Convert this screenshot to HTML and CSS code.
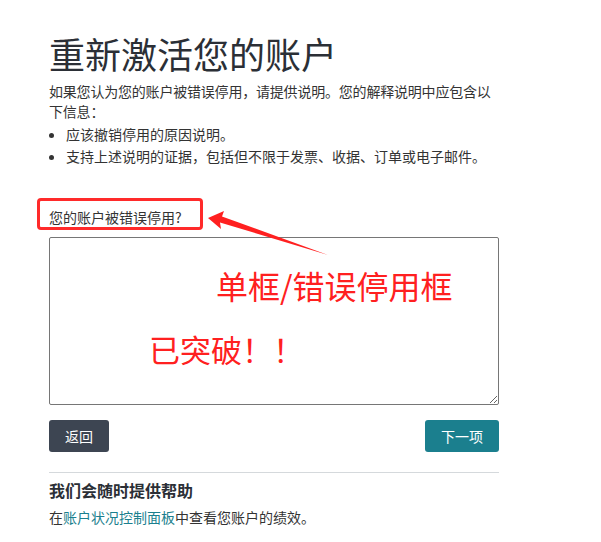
FILE: index.html
```html
<!DOCTYPE html>
<html lang="zh-CN">
<head>
    <meta charset="UTF-8">
    <meta name="viewport" content="width=device-width, initial-scale=1.0">
    <title>重新激活您的账户</title>
    <link rel="stylesheet" href="styles.css">
</head>
<body>
    <div class="page">
        <h1 class="title">重新激活您的账户</h1>
        <p class="intro">如果您认为您的账户被错误停用，请提供说明。您的解释说明中应包含以下信息：</p>
        <ul class="reasons">
            <li>应该撤销停用的原因说明。</li>
            <li>支持上述说明的证据，包括但不限于发票、收据、订单或电子邮件。</li>
        </ul>

        <label class="field-label" for="reason">您的账户被错误停用?</label>
        <textarea id="reason" class="field"></textarea>

        <div class="actions">
            <button class="btn btn-back">返回</button>
            <button class="btn btn-next">下一项</button>
        </div>

        <div class="help">
            <h2>我们会随时提供帮助</h2>
            <p>在<a href="#">账户状况控制面板</a>中查看您账户的绩效。</p>
        </div>
    </div>

    <!-- screenshot annotations -->
    <div class="notes">
        <svg class="arrow" width="601" height="542" viewBox="0 0 601 542">
            <polygon points="208,218 224,211 222,216.5 328,255 220,222.5 221,229" fill="#ff2020"/>
        </svg>
        <div class="note note-1">单框/错误停用框</div>
        <div class="note note-2">已突破！！</div>
    </div>
</body>
</html>
```

FILE: styles.css
```css
body {
    margin: 0;
    font-family: "Noto Sans CJK SC", "Noto Sans", sans-serif;
    color: #333;
    background: #fff;
    position: relative;
    min-height: 542px;
}
.page {
    width: 450px;
    padding: 31px 0 0 49px;
}
.title {
    font-size: 36px;
    font-weight: 400;
    line-height: 44px;
    color: #2b2f36;
    margin: 0 0 6px;
}
.intro {
    font-size: 14px;
    line-height: 20px;
    letter-spacing: -0.2px;
    margin: 0;
}
.reasons {
    font-size: 14px;
    line-height: 22px;
    margin: 2px 0 0;
    padding-left: 17px;
}
.field-label {
    display: block;
    position: relative;
    width: 140px;
    font-size: 14px;
    line-height: 20px;
    margin-top: 40px;
}
.field-label::after {
    content: "";
    position: absolute;
    left: -12px;
    top: -9px;
    width: 160px;
    height: 26px;
    border: 3px solid #ff2a2a;
    border-radius: 4px;
}
.field {
    display: block;
    box-sizing: border-box;
    width: 450px;
    height: 168px;
    margin-top: 10px;
    border: 1px solid #767676;
    border-radius: 2px;
    font: inherit;
}
.actions {
    display: flex;
    justify-content: space-between;
    margin-top: 15px;
}
.btn {
    height: 32px;
    padding: 0 16px;
    border: none;
    border-radius: 3px;
    color: #fff;
    font-family: inherit;
    font-size: 14px;
}
.btn-back {
    background: #3d4552;
}
.btn-next {
    background: #1b7f8e;
}
.help {
    margin-top: 20px;
    border-top: 1px solid #d5d9dc;
    padding-top: 6px;
}
.help h2 {
    font-size: 16px;
    line-height: 22px;
    margin: 0;
    color: #2b2f36;
}
.help p {
    font-size: 14px;
    line-height: 20px;
    margin: 6px 0 0;
}
.help a {
    color: #1b7f8e;
    text-decoration: none;
}
.notes {
    position: absolute;
    left: 0;
    top: 0;
    width: 601px;
    height: 542px;
    pointer-events: none;
}
.arrow {
    position: absolute;
    left: 0;
    top: 0;
}
.note {
    position: absolute;
    color: #ff2020;
    font-size: 32px;
    line-height: 1;
    white-space: nowrap;
}
.note-1 {
    left: 216px;
    top: 269px;
}
.note-2 {
    left: 149px;
    top: 333px;
    font-size: 31px;
}
```
